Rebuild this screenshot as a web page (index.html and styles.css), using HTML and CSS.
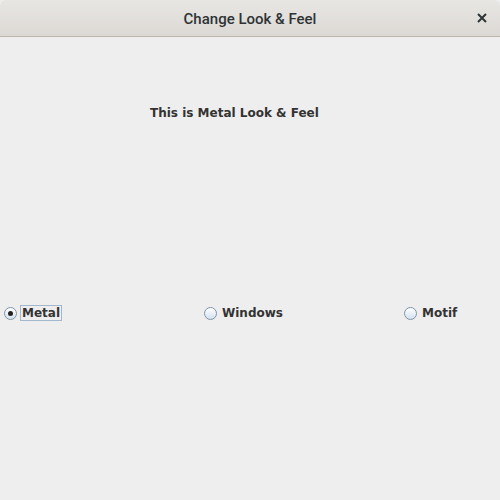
FILE: index.html
```html
<!DOCTYPE html>
<html lang="en">
<head>
    <meta charset="UTF-8">
    <title>Change Look &amp; Feel</title>
    <link rel="stylesheet" href="styles.css">
</head>
<body>

<div class="window">
    <div class="titlebar">
        <span class="title">Change Look &amp; Feel</span>
        <span class="close">
            <svg width="10" height="10" viewBox="0 0 10 10"><path d="M1 1 L9 9 M9 1 L1 9" stroke="#2e3436" stroke-width="2"/></svg>
        </span>
    </div>

    <div class="content">
        <div class="caption">This is Metal Look &amp; Feel</div>

        <div class="options">
            <label class="option">
                <span class="radio checked"></span>
                <span class="text focused">Metal</span>
            </label>
            <label class="option">
                <span class="radio"></span>
                <span class="text">Windows</span>
            </label>
            <label class="option">
                <span class="radio"></span>
                <span class="text">Motif</span>
            </label>
        </div>
    </div>
</div>

</body>
</html>
```

FILE: styles.css
```css
body {
    margin: 0;
    background-color: #eeeeee;
}
.window {
    width: 500px;
    height: 500px;
    display: flex;
    flex-direction: column;
    overflow: hidden;
}
.titlebar {
    height: 36px;
    flex-shrink: 0;
    display: flex;
    align-items: center;
    justify-content: center;
    position: relative;
    background: linear-gradient(#e8e6e3, #dcd9d5);
    border-bottom: 1px solid #bdb6ae;
    border-radius: 6px 6px 0 0;
}
.title {
    font-family: Roboto, sans-serif;
    font-weight: 500;
    font-size: 15px;
    color: #2e3436;
    padding-top: 1px;
}
.close {
    position: absolute;
    right: 13px;
    top: 13px;
    line-height: 0;
}
.content {
    flex: 1;
    background-color: #eeeeee;
    font-family: "DejaVu Sans", sans-serif;
    font-weight: bold;
    font-size: 12px;
    color: #333333;
}
.caption {
    margin-top: 68px;
    padding-left: 150px;
    height: 16px;
    line-height: 16px;
}
.options {
    margin-top: 183px;
    display: grid;
    grid-template-columns: 200px 200px 100px;
}
.option {
    display: flex;
    align-items: center;
    padding-left: 4px;
    height: 18px;
}
.radio {
    width: 11px;
    height: 11px;
    border: 1px solid #8193a7;
    border-radius: 50%;
    background: linear-gradient(#ffffff, #d3e1ef);
    margin-right: 3px;
    display: flex;
    align-items: center;
    justify-content: center;
}
.radio.checked::after {
    content: "";
    width: 5px;
    height: 5px;
    border-radius: 50%;
    background-color: #222222;
}
.text {
    padding: 0 1px;
    border: 1px solid transparent;
    line-height: 14px;
}
.text.focused {
    border-color: #a3b8cc;
}
```
